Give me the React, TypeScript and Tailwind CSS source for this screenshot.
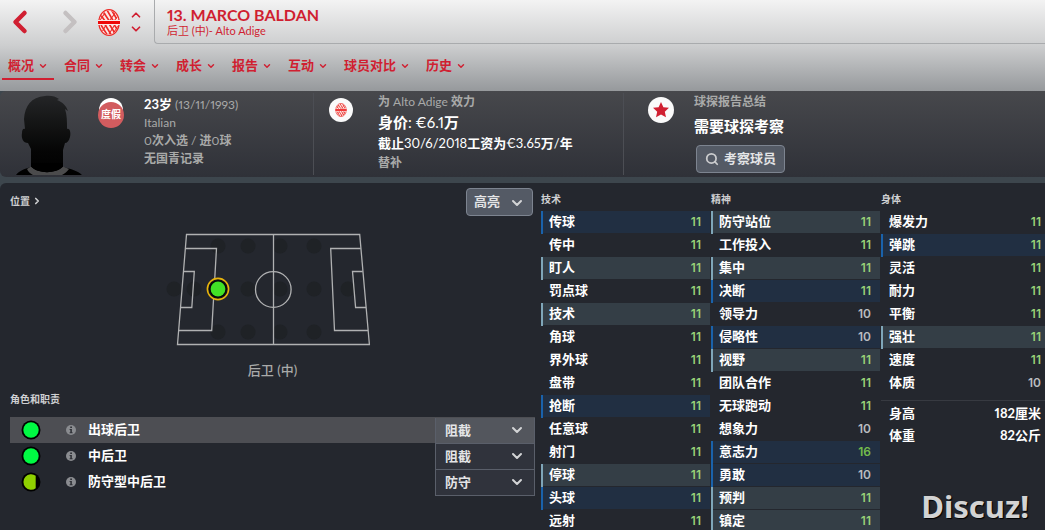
import React from "react";
import { ChevronDown, ChevronLeft, ChevronRight, ChevronUp, Search } from "lucide-react";

type Tone = "key" | "preferred" | "none";
type Attribute = { name: string; value: number; tone: Tone };

const attr = (name: string, value = 11, tone: Tone = "none"): Attribute => ({ name, value, tone });

const tabs = ["概况", "合同", "转会", "成长", "报告", "互动", "球员对比", "历史"];

const technical: Attribute[] = [
  attr("传球", 11, "preferred"),
  attr("传中"),
  attr("盯人", 11, "key"),
  attr("罚点球"),
  attr("技术", 11, "key"),
  attr("角球"),
  attr("界外球"),
  attr("盘带"),
  attr("抢断", 11, "preferred"),
  attr("任意球"),
  attr("射门"),
  attr("停球", 11, "key"),
  attr("头球", 11, "preferred"),
  attr("远射"),
];

const mental: Attribute[] = [
  attr("防守站位", 11, "key"),
  attr("工作投入"),
  attr("集中", 11, "key"),
  attr("决断", 11, "preferred"),
  attr("领导力", 10),
  attr("侵略性", 10, "preferred"),
  attr("视野", 11, "key"),
  attr("团队合作"),
  attr("无球跑动"),
  attr("想象力", 10),
  attr("意志力", 16, "preferred"),
  attr("勇敢", 10, "preferred"),
  attr("预判", 11, "key"),
  attr("镇定", 11, "key"),
];

const physical: Attribute[] = [
  attr("爆发力"),
  attr("弹跳", 11, "preferred"),
  attr("灵活"),
  attr("耐力"),
  attr("平衡"),
  attr("强壮", 11, "key"),
  attr("速度"),
  attr("体质", 10),
];

const roles = [
  { name: "出球后卫", duty: "阻截", full: true, active: true },
  { name: "中后卫", duty: "阻截", full: true, active: false },
  { name: "防守型中后卫", duty: "防守", full: false, active: false },
];

const toneClass: Record<Tone, string> = {
  key: "bg-[#343e46] border-[#7fa6b8]",
  preferred: "bg-[#212f42] border-[#1a62ab]",
  none: "border-transparent",
};

function valueClass(value: number) {
  if (value >= 16) return "text-[#74bd4c]";
  if (value >= 11) return "text-[#98d077]";
  return "text-[#b9bcc0]";
}

function Crest({ className }: { className: string }) {
  return (
    <svg viewBox="0 0 22 27" className={className} aria-hidden="true">
      <clipPath id="crest-oval">
        <ellipse cx="11" cy="13.5" rx="9.4" ry="12" />
      </clipPath>
      <ellipse cx="11" cy="13.5" rx="10.2" ry="12.8" fill="#fbe9e8" stroke="#ec2a26" strokeWidth="1.2" />
      <g clipPath="url(#crest-oval)" stroke="#ec2a26" strokeWidth="1.6" fill="none">
        <path d="M2 5l5 7M5 2.500l6 9M9 1l6 10.500M13.500 1l5 8.500" />
        <path d="M2 11l5 -7M12 11l6 -8M16 12l5 -6" strokeWidth="1.1" />
        <path d="M3 16l6 9.500M7 15.500l6 10M11.500 15.500l5 8M16 15.500l4 6" />
        <path d="M4 23l4 -7M11 25l5 -8M15 25l5 -8" strokeWidth="1.1" />
      </g>
      <path d="M0 11h22v5h-22z" fill="#fbe9e8" />
      <path d="M0 12h22v3h-22z" fill="#ee0808" />
    </svg>
  );
}

function Silhouette() {
  return (
    <svg viewBox="0 0 70 80" className="block h-20 w-[70px]" aria-hidden="true">
      <defs>
        <linearGradient id="head-shade" x1="0" y1="0" x2="0" y2="1">
          <stop offset="0" stopColor="#242527" />
          <stop offset="0.35" stopColor="#141515" />
          <stop offset="0.7" stopColor="#050505" />
          <stop offset="1" stopColor="#000" />
        </linearGradient>
      </defs>
      <path
        fill="url(#head-shade)"
        d="M2 80C5 76 10 74 17 72V54L14 48C9 48 7 43 8 38C8 35 9 33 11 34L10 24C11 11 17 2 31 1C35 0 42 1 45 4L43 5C48 7 52 10 54 16L51 14C53 20 53 26 53 34C56 33 57 38 56 42C55 46 53 48 51 48L49 55V72C57 74 64 76 68 80Z"
      />
      <path d="M13 74L17 71.500C24 79 42 79 49 71.500L55 74C53 77 50 79 48 80H19C17 79 14 77 13 74Z" fill="#4b4b4c" />
      <path d="M17 71.500C24 79 42 79 49 71.500V68H17Z" fill="#000" />
    </svg>
  );
}

function Pitch() {
  const spots = [
    [218, 246], [248, 246], [280, 246], [314, 246],
    [174, 289], [194, 289], [248, 289], [280, 289], [314, 289], [348, 289],
    [218, 332], [248, 332], [280, 332], [314, 332],
  ];
  return (
    <svg viewBox="163 228 220 124" className="h-[124px] w-[220px]" role="img" aria-label="后卫 (中)">
      {spots.map(([x, y]) => (
        <circle key={`${x}-${y}`} cx={x} cy={y} r="7.5" fill="#1f2226" />
      ))}
      <g fill="none" stroke="#b0b1b2" strokeWidth="1.3">
        <path d="M186.500 234.500H359.700L369.400 344.500H177.500Z" />
        <path d="M273.500 234.500V344.500" />
        <circle cx="273.300" cy="289.500" r="17.800" />
        <path d="M185.500 248.500H216.500L211.700 330.500H178.500" />
        <path d="M183.500 271.500H194.300L191.800 307.500H180.500" />
        <path d="M360.700 248.500H330.700L334.500 330.500H368" />
        <path d="M362.700 271.500H352.500L355.600 307.500H366" />
      </g>
      <circle cx="218" cy="289" r="10.600" fill="#14171c" stroke="#e8b40c" strokeWidth="1.600" />
      <circle cx="218" cy="289" r="8.800" fill="#050805" />
      <circle cx="218" cy="289" r="7.400" fill="#41e226" />
    </svg>
  );
}

function AbilityDot({ full }: { full: boolean }) {
  return (
    <svg viewBox="0 0 20 20" className="size-5 shrink-0" aria-hidden="true">
      <circle cx="10" cy="10" r="9.5" fill="#000" />
      {full ? (
        <circle cx="10" cy="10" r="7.7" fill="#00fa43" />
      ) : (
        <path d="M14.7 3.8A7.7 7.7 0 1 0 14.7 16.2Z" fill="#8fd000" />
      )}
    </svg>
  );
}

function InfoIcon() {
  return (
    <svg viewBox="0 0 10 10" className="size-[10px] shrink-0" aria-hidden="true">
      <circle cx="5" cy="5" r="5" fill="#8a8c90" />
      <path d="M4.2 1.6h1.8v1.3h-1.8zM3.600 4h2.300v3.200h.7v1h-3v-1h.7v-2.200h-.7z" fill="#303238" />
    </svg>
  );
}

function AttributeTable({ title, rows, last = false }: { title: string; rows: Attribute[]; last?: boolean }) {
  return (
    <table className="w-full border-separate border-spacing-0">
      <caption className="h-7 pt-2 text-left text-[10px] leading-4 font-bold text-[#cfd0d2]">{title}</caption>
      <tbody>
        {rows.map((row) => (
          <tr key={row.name} className="h-[23px]">
            <th
              scope="row"
              className={`border-l-2 pb-[2px] pl-[6px] text-left text-[13px] leading-[21px] font-bold text-white shadow-[inset_0_-1px_0_#24272e] ${toneClass[row.tone]}`}
            >
              {row.name}
            </th>
            <td
              className={`pb-[2px] text-right font-['Inter',sans-serif] text-xs leading-[21px] font-semibold shadow-[inset_0_-1px_0_#24272e] ${last ? "pr-1" : "pr-[9px]"} ${toneClass[row.tone]} ${valueClass(row.value)}`}
            >
              {row.value}
            </td>
          </tr>
        ))}
      </tbody>
    </table>
  );
}

export default function App() {
  return (
    <div className="flex min-h-screen flex-col bg-[#3d464d] font-['Lato','Noto_Sans_CJK_SC',sans-serif] text-white proportional-nums">
      <header className="bg-linear-to-b from-[#f3f3f3] via-[#cdcecf] to-[#96999c] pb-[11px] text-[#d01f31]">
        <div className="flex h-11">
          <div className="flex w-[154px] shrink-0 items-center">
            <button type="button" aria-label="后退" className="ml-1 flex h-8 w-8 items-center justify-center">
              <ChevronLeft className="size-9 shrink-0" strokeWidth={3} />
            </button>
            <button type="button" aria-label="前进" disabled className="ml-[18px] flex h-8 w-8 items-center justify-center text-[#c4c0c1]">
              <ChevronRight className="size-9 shrink-0" strokeWidth={3} />
            </button>
            <Crest className="ml-3 h-[27px] w-[22px] shrink-0" />
            <div className="ml-2 flex flex-col">
              <button type="button" aria-label="上一名球员">
                <ChevronUp className="h-[14px] w-4" strokeWidth={3} />
              </button>
              <button type="button" aria-label="下一名球员">
                <ChevronDown className="h-[14px] w-4" strokeWidth={3} />
              </button>
            </div>
          </div>
          <div className="flex-1 rounded-bl border-b border-l border-[#a9abad] pt-[5px] pl-3">
            <h1 className="text-[16px] leading-5 font-bold">13. MARCO BALDAN</h1>
            <p className="text-[11px] leading-3">后卫 (中)- Alto Adige</p>
          </div>
        </div>
        <nav className="flex gap-1 pl-[2px]">
          {tabs.map((tab, i) => (
            <a
              key={tab}
              href="#"
              className={`flex h-9 items-center gap-1 border-b-2 px-[6px] pt-[10px] text-[13px] font-bold ${i === 0 ? "border-[#d01f31]" : "border-transparent"}`}
            >
              {tab}
              <ChevronDown className="size-[10px]" strokeWidth={3.4} />
            </a>
          ))}
        </nav>
      </header>

      <section className="grid grid-cols-[314fr_310fr_421fr] rounded-l-md bg-linear-to-b from-[#47484c] to-[#2f3138] text-xs text-[#a9aaa9]">
        <div className="my-[2px] flex border-r border-[#4c4e54]">
          <div className="mt-[2px] ml-[14px] flex w-[84px] shrink-0 items-end">
            <Silhouette />
          </div>
          <div className="relative mt-[5px] h-[30px] w-[26px] shrink-0">
            <span className="absolute top-0 left-[1px] size-6 rounded-full bg-white" />
            <span className="absolute top-1 left-0 flex size-[26px] items-center justify-center rounded-full bg-[#d25c5f] text-[10px] font-bold text-white">
              度假
            </span>
          </div>
          <div className="ml-5 pt-[2px] leading-[18px]">
            <p>
              <span className="text-[13px] font-bold text-white">23岁</span> (13/11/1993)
            </p>
            <p>Italian</p>
            <p>
              0<b>次入选</b> / <b>进</b>0<b>球</b>
            </p>
            <p className="font-bold">无国青记录</p>
          </div>
        </div>

        <div className="my-[2px] flex border-r border-[#4c4e54]">
          <span className="mt-[5px] ml-[15px] flex size-6 shrink-0 items-center justify-center rounded-full bg-[#fafafa]">
            <Crest className="h-[14px] w-3" />
          </span>
          <div className="ml-[25px] whitespace-nowrap">
            <p className="leading-[18px]">
              <b>为</b> Alto Adige <b>效力</b>
            </p>
            <p className="text-[15px] leading-[22px] text-white">
              <b>身价</b>: €6.1<b>万</b>
            </p>
            <p className="text-[13px] leading-[21px] text-white">
              <b>截止</b>30/6/2018<b>工资为</b>€3.65<b>万</b>/<b>年</b>
            </p>
            <p className="leading-[18px] font-bold">替补</p>
          </div>
        </div>

        <div className="my-[2px] flex">
          <span className="mt-1 ml-6 flex size-[26px] shrink-0 items-center justify-center rounded-full bg-[#fafafa]">
            <svg viewBox="0 0 24 24" className="size-4" aria-hidden="true">
              <path d="M12 0l3.600 7.900 8.400.9-6.300 5.700 1.800 8.500L12 18.700 4.500 23l1.800-8.500L0 8.800l8.400-.9z" fill="#d01f31" />
            </svg>
          </span>
          <div className="ml-5">
            <p className="leading-[18px] font-bold">球探报告总结</p>
            <p className="text-[15px] leading-[30px] font-bold text-white">需要球探考察</p>
            <button
              type="button"
              className="mt-1 ml-[2px] flex h-7 items-center gap-[5px] rounded border border-[#7d8490] bg-[#545a65] px-2 text-[13px] font-bold text-[#e3e4e6]"
            >
              <Search className="size-[14px] text-[#cbccce]" strokeWidth={3} />
              考察球员
            </button>
          </div>
        </div>
      </section>

      <main className="relative mt-[6px] grid flex-1 grid-cols-[541fr_170fr_170fr_164fr] rounded-tl-md bg-[#24272e]">
        <section className="pr-[6px]">
          <div className="flex h-10 items-start justify-between pt-[5px] pr-[2px] pl-[10px]">
            <a href="#" className="mt-1 flex items-center gap-[2px] text-[10px] leading-[18px] font-bold text-[#cfd0d2]">
              位置
              <ChevronRight className="size-[10px]" strokeWidth={4} />
            </a>
            <div className="relative">
              <select
                aria-label="高亮"
                className="h-7 w-[67px] appearance-none rounded border border-[#7d8490] bg-[#545a65] pl-[7px] text-[13px] font-bold text-[#e3e4e6]"
              >
                <option>高亮</option>
              </select>
              <ChevronDown className="pointer-events-none absolute top-[7px] right-2 size-4 text-[#d3d4d6]" strokeWidth={3} />
            </div>
          </div>

          <div className="flex flex-col items-center pt-[5px] pl-[10px]">
            <Pitch />
            <p className="mt-2 text-[13px] leading-5 font-medium text-[#a9aaa9]">后卫 (中)</p>
          </div>

          <h2 className="mt-[9px] pl-[10px] text-[10px] leading-5 font-bold text-[#cfd0d2]">角色和职责</h2>
          <ul className="mt-2 ml-[10px]">
            {roles.map((role) => (
              <li key={role.name} className={`flex h-[26px] items-center pl-[11px] ${role.active ? "bg-[#4d4e53]" : ""}`}>
                <AbilityDot full={role.full} />
                <span className="ml-[25px] flex">
                  <InfoIcon />
                </span>
                <span className="ml-3 flex-1 text-[13px] font-bold">{role.name}</span>
                <div className="relative h-[26px]">
                  <select
                    aria-label={role.name}
                    className={`h-[26px] w-[100px] appearance-none border-x border-b border-[#5a5f6a] pl-[9px] text-[13px] font-bold text-[#e3e4e6] ${role.active ? "bg-[#53565d]" : "bg-[#30333c]"}`}
                  >
                    <option>{role.duty}</option>
                  </select>
                  <ChevronDown className="pointer-events-none absolute top-[5px] right-[10px] size-4 text-[#d3d4d6]" strokeWidth={3} />
                </div>
              </li>
            ))}
          </ul>
        </section>

        <section className="pr-px">
          <AttributeTable title="技术" rows={technical} />
        </section>
        <section className="pr-px">
          <AttributeTable title="精神" rows={mental} />
        </section>
        <section>
          <AttributeTable title="身体" rows={physical} last />
          <dl className="mt-[5px] grid grid-cols-2 border-t border-[#373a41] pt-px pr-1 pl-2 text-[13px] leading-[22px] font-bold">
            <dt>身高</dt>
            <dd className="text-right">182厘米</dd>
            <dt>体重</dt>
            <dd className="text-right">82公斤</dd>
          </dl>
        </section>
        <p className="absolute right-4 bottom-[9px] font-['Noto_Sans','Open_Sans',sans-serif] text-[31px] leading-9 font-bold text-[#d3d3d3] [text-shadow:1px_1px_1px_#000]">
          Discuz!
        </p>
      </main>
    </div>
  );
}
